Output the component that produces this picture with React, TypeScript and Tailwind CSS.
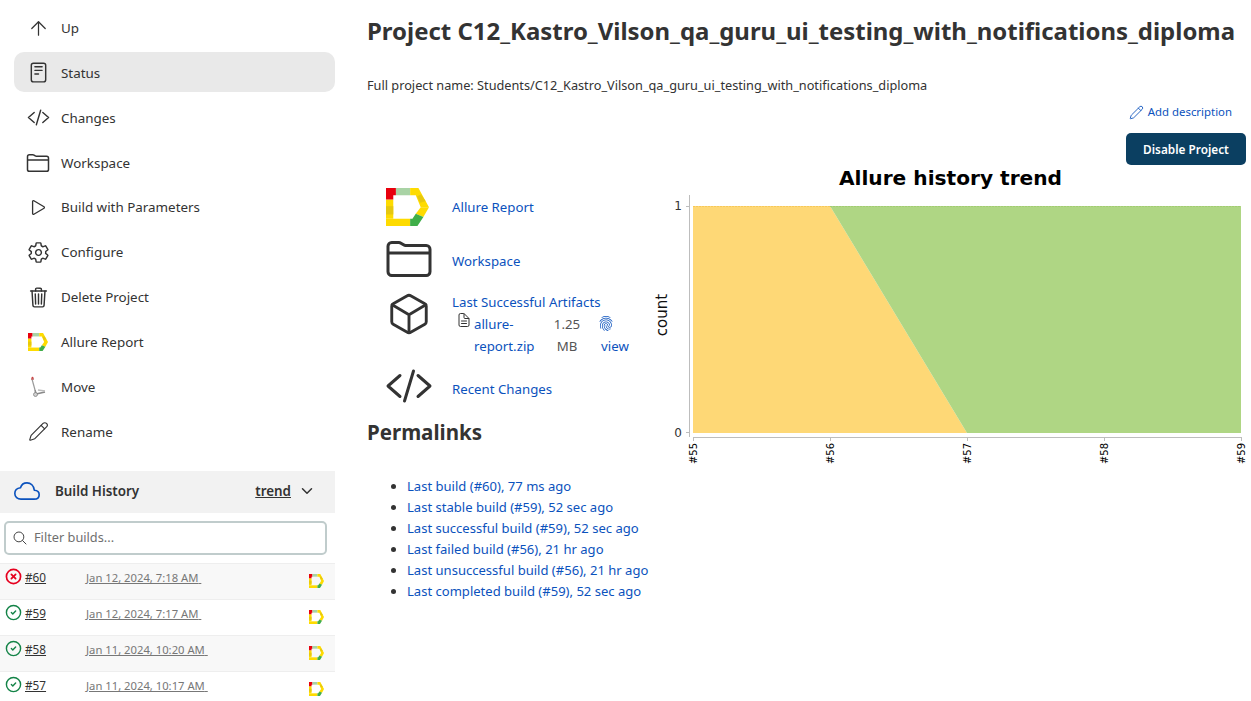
import React from "react";
import {
  IoReaderOutline, IoCodeSlashOutline, IoFolderOutline, IoPlayOutline,
  IoSettingsOutline, IoTrashOutline, IoCloudOutline, IoSearchOutline,
  IoChevronDownOutline, IoFingerPrintOutline, IoDocumentTextOutline, IoCubeOutline,
} from "react-icons/io5";
import { ArrowUp, Pencil, CircleCheck, CircleX } from "lucide-react";

function AllureLogo({ className }: { className?: string }) {
  return (
    <svg viewBox="0 0 130 115" className={className} preserveAspectRatio="none">
      <polygon points="0,35 22,35 22,93 0,93" fill="#fedb00" />
      <polygon points="0,55 22,55 22,80 0,80" fill="#e6c80f" />
      <polygon points="0,93 73,93 73,115 0,115" fill="#fedb00" />
      <polygon points="0,0 30,0 30,22 22,22 22,35 0,35" fill="#e8000d" />
      <polygon points="30,0 73,0 73,22 30,22" fill="#a9d3a5" />
      <polygon points="73,0 98,0 130,58 105,58 90,22 73,22" fill="#fedb00" />
      <polygon points="106,20 120,40 103,45 94,25" fill="#e6c80f" />
      <polygon points="105,58 130,58 113,88 90,78" fill="#fedb00" />
      <polygon points="90,78 113,88 95,115 73,115 73,93 80,93" fill="#3fae49" />
    </svg>
  );
}

function MoveIcon() {
  return (
    <svg viewBox="0 0 20 22" className="w-5 h-[22px]">
      <path d="M4 3 L7 14" stroke="#9a9a9a" strokeWidth="1.2" fill="none" />
      <path d="M3 3 h3" stroke="#c06060" strokeWidth="1.4" />
      <circle cx="4.5" cy="1.8" r="1" fill="#c84040" />
      <path d="M7 14 L8 18 L17 16" stroke="#8a8a8a" strokeWidth="1.6" fill="none" />
      <circle cx="7.5" cy="18.5" r="2" fill="#d0d0d0" stroke="#777" strokeWidth="0.7" />
      <path d="M10 14 L17 15" stroke="#bbb" strokeWidth="1.4" />
    </svg>
  );
}

const nav: { label: string; icon: React.ReactNode; active?: boolean }[] = [
  { label: "Up", icon: <ArrowUp size={23} strokeWidth={1.3} /> },
  { label: "Status", icon: <IoReaderOutline className="text-[23px]" />, active: true },
  { label: "Changes", icon: <IoCodeSlashOutline className="text-[23px]" /> },
  { label: "Workspace", icon: <IoFolderOutline className="text-[24px]" /> },
  { label: "Build with Parameters", icon: <IoPlayOutline className="text-[21px]" /> },
  { label: "Configure", icon: <IoSettingsOutline className="text-[23px]" /> },
  { label: "Delete Project", icon: <IoTrashOutline className="text-[23px]" /> },
  { label: "Allure Report", icon: <AllureLogo className="w-5 h-[18px]" /> },
  { label: "Move", icon: <MoveIcon /> },
  { label: "Rename", icon: <Pencil size={21} strokeWidth={1.3} /> },
];

const builds = [
  { n: "#60", d: "Jan 12, 2024, 7:18 AM", ok: false },
  { n: "#59", d: "Jan 12, 2024, 7:17 AM", ok: true },
  { n: "#58", d: "Jan 11, 2024, 10:20 AM", ok: true },
  { n: "#57", d: "Jan 11, 2024, 10:17 AM", ok: true },
];

const permalinks = [
  "Last build (#60), 77 ms ago",
  "Last stable build (#59), 52 sec ago",
  "Last successful build (#59), 52 sec ago",
  "Last failed build (#56), 21 hr ago",
  "Last unsuccessful build (#56), 21 hr ago",
  "Last completed build (#59), 52 sec ago",
];

function Chart() {
  const ticks = [
    { x: 693, t: "#55" },
    { x: 830, t: "#56" },
    { x: 967, t: "#57" },
    { x: 1104, t: "#58" },
    { x: 1241, t: "#59" },
  ];
  return (
    <svg viewBox="650 165 601 305" className="w-[601px] h-[305px] shrink-0" style={{ fontFamily: "'DejaVu Sans', sans-serif" }}>
      <text x="950.5" y="185" textAnchor="middle" fontSize="20.15" fontWeight="700" fill="#000">Allure history trend</text>
      <text transform="translate(667,315) rotate(-90)" textAnchor="middle" fontSize="15" fill="#111">count</text>
      <polygon points="693,206 830,206 967,433 693,433" fill="#fed876" />
      <polygon points="830,206 1241,206 1241,433 967,433" fill="#afd684" />
      <path d="M693 206.5 H830" stroke="#f7c859" strokeWidth="1" strokeDasharray="2 1" />
      <path d="M830 206.5 H1241" stroke="#a2cc72" strokeWidth="1" strokeDasharray="2 1" />
      <path d="M689.5 195 V437" stroke="#bdbdbd" strokeWidth="1" />
      <path d="M686 206.5 H689 M686 432.5 H689" stroke="#bdbdbd" strokeWidth="1" />
      <path d="M693 437.5 H1241" stroke="#bdbdbd" strokeWidth="1" />
      <text x="682" y="210" textAnchor="end" fontSize="12" fill="#333">1</text>
      <text x="682" y="437" textAnchor="end" fontSize="12" fill="#333">0</text>
      {ticks.map((k) => (
        <g key={k.t}>
          <path d={`M${k.x + 0.5} 437 V441`} stroke="#bdbdbd" strokeWidth="1" />
          <text transform={`translate(${k.x + 3.5},443) rotate(-90)`} textAnchor="end" fontSize="10" fill="#000">{k.t}</text>
        </g>
      ))}
    </svg>
  );
}

export default function App() {
  return (
    <div className="flex w-[1251px] h-[701px] overflow-hidden bg-white text-[#333] text-[13.25px]" style={{ fontFamily: "'Noto Sans', sans-serif" }}>
      <aside className="w-[335px] shrink-0 flex flex-col">
        <nav className="pt-[7px] flex flex-col gap-[4.88px] shrink-0">
          {nav.map((n) => (
            <div key={n.label} className={`ml-[14px] h-10 pt-[2px] flex items-center rounded-[10px] ${n.active ? "bg-[#e9e9e9]" : ""}`}>
              <span className="w-[47px] flex justify-center pl-[1px] shrink-0 text-[#333]">{n.icon}</span>
              <span className="text-[13.4px] text-[#333]">{n.label}</span>
            </div>
          ))}
        </nav>
        <div className="mt-[20.08px] h-[42px] pb-[2px] shrink-0 bg-[#f2f2f2] flex items-center">
          <IoCloudOutline className="text-[26px] text-[#0b52bd] ml-[14px]" />
          <span className="ml-[15px] font-semibold text-[13.4px]">Build History</span>
          <span className="ml-auto font-semibold underline text-[13.4px]">trend</span>
          <IoChevronDownOutline className="text-[16px] ml-[8px] mr-[20px]" />
        </div>
        <div className="ml-1 mr-2 mt-2 h-[34px] shrink-0 rounded-[5px] border-2 border-[#c0cccc] flex items-center bg-white">
          <IoSearchOutline className="text-[16px] ml-[6px] text-[#444]" />
          <span className="ml-[6px] text-[#6f6f6f] text-[12.75px]">Filter builds...</span>
        </div>
        <div className="mt-2 flex flex-col shrink-0">
          {builds.map((b, i) => (
            <div key={b.n} className={`h-9 shrink-0 border-t border-[#eeeeee] flex items-start relative ${i % 2 === 0 ? "bg-[#f8f8f8]" : "bg-white"}`}>
              {b.ok ? (
                <CircleCheck size={17} strokeWidth={2} className="text-[#138347] ml-[5px] mt-[4px] shrink-0" />
              ) : (
                <CircleX size={17} strokeWidth={2.4} className="text-[#e6001f] ml-[5px] mt-[4px] shrink-0" />
              )}
              <span className="ml-[3px] mt-[5px] underline text-[11.75px] w-[61px] shrink-0">{b.n}</span>
              <span className="mt-[6px] underline text-[11.25px] leading-[16px] text-[#777] whitespace-pre">{b.d} </span>
              <AllureLogo className="absolute left-[309px] top-[10px] w-[15px] h-[14px]" />
            </div>
          ))}
        </div>
      </aside>
      <main className="ml-[32px] flex-1 min-w-0 flex flex-col">
        <h1 className="mt-[14px] text-[23.95px] leading-[34px] font-bold text-[#333] whitespace-nowrap">
          Project C12_Kastro_Vilson_qa_guru_ui_testing_with_notifications_diploma
        </h1>
        <p className="mt-[27px] text-[12.73px] leading-[20px]">Full project name: Students/C12_Kastro_Vilson_qa_guru_ui_testing_with_notifications_diploma</p>
        <div className="mt-[7px] h-5 flex items-center justify-end pr-[19px] text-[#0b52bd] text-[11.4px]">
          <Pencil size={15} strokeWidth={1.4} className="mr-[4px]" />
          <span>Add description</span>
        </div>
        <div className="mt-[11px] flex justify-end pr-[5px]">
          <div className="w-[120px] h-8 pt-[1px] rounded-[5px] bg-[#0b3f61] text-white font-semibold text-[11.8px] flex items-center justify-center">Disable Project</div>
        </div>
        <div className="flex">
          <div className="w-[283px] shrink-0 pt-[20px] text-[#0b52bd]">
            <div className="h-11 flex items-center">
              <AllureLogo className="ml-[19px] w-[43px] h-[38px] shrink-0" />
              <span className="ml-[23px] pt-[2px]">Allure Report</span>
            </div>
            <div className="mt-[10px] h-11 flex items-center">
              <span className="w-[85px] shrink-0 flex justify-center -ml-[1px] -mt-[4px] text-[#333]"><IoFolderOutline className="text-[48px]" /></span>
              <span className="ml-[1px] pt-[2px]">Workspace</span>
            </div>
            <div className="mt-[8px] h-[66px] flex">
              <span className="w-[85px] shrink-0 flex justify-center -ml-[1px] text-[#333]"><IoCubeOutline className="text-[46px]" /></span>
              <div className="flex flex-col ml-[1px]">
                <span className="leading-[22px]">Last Successful Artifacts</span>
                <div className="flex leading-[22px]">
                  <IoDocumentTextOutline className="text-[#333] text-[16px] ml-[2px] -mt-[1px] w-[20px] shrink-0" />
                  <span className="w-[73px] shrink-0">allure-<br />report.zip</span>
                  <span className="w-[44px] shrink-0 text-[#555] text-center -ml-[2px]">1.25<br />MB</span>
                  <span className="flex flex-col items-center w-[34px] ml-[9px]">
                    <IoFingerPrintOutline className="text-[16px] -mt-[1px] h-[23px] self-start" />
                    <span>view</span>
                  </span>
                </div>
              </div>
            </div>
            <div className="mt-[10px] h-11 flex items-center">
              <span className="w-[85px] shrink-0 flex justify-center -ml-[1px] -mt-[7px] text-[#333]"><IoCodeSlashOutline className="text-[48px]" /></span>
              <span className="ml-[1px] pt-[2px]">Recent Changes</span>
            </div>
            <h2 className="mt-[5px] text-[20.5px] leading-[32px] font-bold text-[#333]">Permalinks</h2>
            <ul className="mt-[28px] pl-[40px] list-disc marker:text-[#333] text-[13.05px]">
              {permalinks.map((p) => (
                <li key={p} className="h-[21px] leading-[21px] whitespace-nowrap">{p}</li>
              ))}
            </ul>
          </div>
          <div><Chart /></div>
        </div>
      </main>
    </div>
  );
}
